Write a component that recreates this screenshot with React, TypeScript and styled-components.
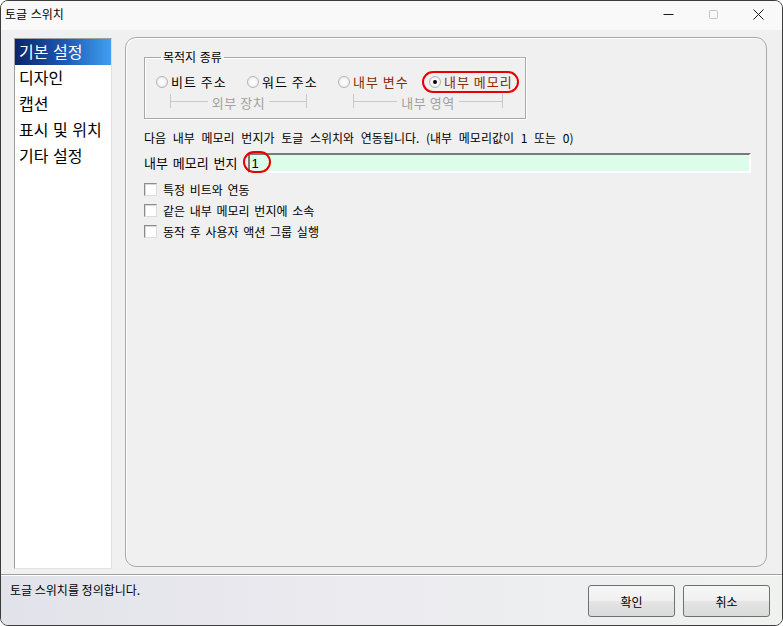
import React from "react";
import styled, { createGlobalStyle } from "styled-components";

const GlobalStyle = createGlobalStyle`
    html, body {
        margin: 0;
        padding: 0;
        background: #ffffff;
    }
    body {
        font-family: "Noto Sans CJK KR", "Liberation Sans", sans-serif;
        color: #000;
    }
    * {
        box-sizing: border-box;
    }
`;

const menuItems = ["기본 설정", "디자인", "캡션", "표시 및 위치", "기타 설정"];

const checkOptions = ["특정 비트와 연동", "같은 내부 메모리 번지에 소속", "동작 후 사용자 액션 그룹 실행"];

const App: React.FC = () => {
    return (
        <>
            <GlobalStyle />
            <Window>
                <TitleBar>
                    <Title>토글 스위치</Title>
                    <Controls>
                        <CtrlButton>
                            <svg width="11" height="11" viewBox="0 0 11 11">
                                <line x1="0.5" y1="5.5" x2="10.5" y2="5.5" stroke="#1a1a1a" strokeWidth="1" />
                            </svg>
                        </CtrlButton>
                        <CtrlButton>
                            <svg width="11" height="11" viewBox="0 0 11 11">
                                <rect x="1.5" y="1.5" width="8" height="8" rx="1" fill="none" stroke="#c4c4c4" strokeWidth="1" />
                            </svg>
                        </CtrlButton>
                        <CtrlButton>
                            <svg width="11" height="11" viewBox="0 0 11 11">
                                <path d="M0.5 0.5 L10.5 10.5 M10.5 0.5 L0.5 10.5" stroke="#1a1a1a" strokeWidth="1" />
                            </svg>
                        </CtrlButton>
                    </Controls>
                </TitleBar>

                <Body>
                    <ListBox>
                        {menuItems.map((item, i) => (
                            <ListItem key={item} $selected={i === 0}>
                                {item}
                            </ListItem>
                        ))}
                    </ListBox>

                    <Panel>
                        <GroupBox>
                            <Legend>목적지 종류</Legend>
                            <RadioRow>
                                <RadioItem>
                                    <RadioDot />
                                    <RadioLabel>비트 주소</RadioLabel>
                                </RadioItem>
                                <RadioItem>
                                    <RadioDot />
                                    <RadioLabel>워드 주소</RadioLabel>
                                </RadioItem>
                                <RadioItem>
                                    <RadioDot />
                                    <RadioLabel $internal>내부 변수</RadioLabel>
                                </RadioItem>
                                <RadioItem>
                                    <RadioDot $checked />
                                    <RadioLabel $internal>내부 메모리</RadioLabel>
                                    <HighlightRing $left={-7} $top={-11} $width={97} $height={22} />
                                </RadioItem>
                            </RadioRow>
                            <BracketRow>
                                <Bracket $width={137}>
                                    <BracketText>외부 장치</BracketText>
                                </Bracket>
                                <Bracket $width={150} $offset={46}>
                                    <BracketText>내부 영역</BracketText>
                                </Bracket>
                            </BracketRow>
                        </GroupBox>

                        <Description>
                            다음 내부 메모리 번지가 토글 스위치와 연동됩니다. (내부 메모리값이 1 또는 0)
                        </Description>

                        <AddressRow>
                            <FieldLabel>내부 메모리 번지</FieldLabel>
                            <FieldBox>
                                <FieldInput defaultValue="1" />
                                <HighlightRing $left={-5} $top={-2} $width={28} $height={22} />
                            </FieldBox>
                        </AddressRow>

                        <CheckList>
                            {checkOptions.map((label) => (
                                <CheckRow key={label}>
                                    <CheckBox />
                                    <CheckLabel>{label}</CheckLabel>
                                </CheckRow>
                            ))}
                        </CheckList>
                    </Panel>
                </Body>

                <Footer>
                    <StatusText>토글 스위치를 정의합니다.</StatusText>
                    <ButtonGroup>
                        <DialogButton>확인</DialogButton>
                        <DialogButton>취소</DialogButton>
                    </ButtonGroup>
                </Footer>
            </Window>
        </>
    );
};

export default App;

const Window = styled.div`
    width: 783px;
    height: 626px;
    display: flex;
    flex-direction: column;
    border: 1px solid #3c3c3c;
    border-radius: 8px;
    overflow: hidden;
    background: #f0f0f0;
`;

const TitleBar = styled.div`
    height: 29px;
    flex-shrink: 0;
    display: flex;
    align-items: flex-start;
    justify-content: space-between;
    background: #f9f9f9;
`;

const Title = styled.span`
    margin: 4px 0 0 4px;
    font-size: 12px;
    line-height: 17px;
    word-spacing: 1px;
`;

const Controls = styled.div`
    display: flex;
    margin-right: 1px;
`;

const CtrlButton = styled.div`
    width: 45px;
    height: 26px;
    display: flex;
    align-items: center;
    justify-content: center;
`;

const Body = styled.div`
    flex: 1;
    display: flex;
    gap: 13px;
    padding: 7px 15px 5px 13px;
`;

const ListBox = styled.div`
    width: 98px;
    margin-top: 1px;
    background: #ffffff;
    border: 1px solid #a0a0a0;
    border-right-color: #e0e0e0;
    border-bottom-color: #e0e0e0;
    padding: 0;
`;

const ListItem = styled.div<{ $selected?: boolean }>`
    height: 26px;
    padding-left: 4px;
    font-size: 16px;
    line-height: 25px;
    word-spacing: 1px;
    color: ${(p) => (p.$selected ? "#ffffff" : "#000000")};
    background: ${(p) => (p.$selected ? "linear-gradient(to right, #0a246a 0%, #1f5cb8 55%, #3fa1ef 100%)" : "transparent")};
`;

const Panel = styled.div`
    flex: 1;
    margin-bottom: 2px;
    border: 1px solid #a8a8a8;
    border-radius: 11px;
    box-shadow: inset 1px 1px 0 #ffffff;
    padding: 12px 18px 0 18px;
    display: flex;
    flex-direction: column;
    align-items: flex-start;
`;

const GroupBox = styled.fieldset`
    width: 382px;
    height: 69px;
    margin: 0;
    padding: 0 0 0 11px;
    border: 1px solid #a8a8a8;
    box-shadow: 1px 1px 0 #ffffff, inset 1px 1px 0 #ffffff;
    border-radius: 0;
`;

const Legend = styled.legend`
    margin-left: 5px;
    padding: 0 2px;
    font-size: 12px;
    line-height: 14px;
    word-spacing: 1px;
`;

const RadioRow = styled.div`
    display: flex;
    align-items: center;
    height: 22px;
    margin-top: 7px;
`;

const RadioItem = styled.div`
    position: relative;
    width: 91px;
    display: flex;
    align-items: center;
    gap: 3px;
`;

const RadioDot = styled.span<{ $checked?: boolean }>`
    width: 12px;
    height: 12px;
    flex-shrink: 0;
    border-radius: 50%;
    border: 1px solid #b4b4b4;
    background: radial-gradient(circle at 50% 50%, #ffffff 0%, #f4f4f4 55%, #dcdcdc 100%);
    display: flex;
    align-items: center;
    justify-content: center;

    &::after {
        content: "";
        width: 4px;
        height: 4px;
        border-radius: 50%;
        background: ${(p) => (p.$checked ? "#000000" : "transparent")};
    }
`;

const RadioLabel = styled.span<{ $internal?: boolean }>`
    font-size: 13px;
    line-height: 18px;
    letter-spacing: 1px;
    white-space: nowrap;
    color: ${(p) => (p.$internal ? "#8a2a00" : "#000000")};
`;

const HighlightRing = styled.span<{ $left: number; $top: number; $width: number; $height: number }>`
    position: absolute;
    left: ${(p) => p.$left}px;
    top: ${(p) => (p.$top < -5 ? `calc(50% + ${p.$top}px)` : `${p.$top}px`)};
    width: ${(p) => p.$width}px;
    height: ${(p) => p.$height}px;
    border: 2.5px solid #e60000;
    border-radius: 11px;
    pointer-events: none;
`;

const BracketRow = styled.div`
    display: flex;
    margin-left: 14px;
    margin-top: 1px;
`;

const Bracket = styled.div<{ $width: number; $offset?: number }>`
    position: relative;
    width: ${(p) => p.$width}px;
    height: 14px;
    margin-left: ${(p) => p.$offset ?? 0}px;
    display: flex;
    justify-content: center;
    align-items: flex-end;
    border-left: 1px solid #c8c8c8;
    border-right: 1px solid #c8c8c8;

    &::before {
        content: "";
        position: absolute;
        left: 0;
        right: 0;
        bottom: 6px;
        border-top: 1px solid #c8c8c8;
    }
`;

const BracketText = styled.span`
    position: relative;
    top: 3px;
    padding: 0 4px;
    background: #f0f0f0;
    font-size: 13px;
    line-height: 16px;
    letter-spacing: 0.5px;
    color: #a0a0a0;
`;

const Description = styled.div`
    margin-top: 11px;
    font-size: 12px;
    line-height: 16px;
    word-spacing: 4px;
`;

const AddressRow = styled.div`
    display: flex;
    align-items: center;
    width: 100%;
    margin-top: 7px;
    gap: 10px;
`;

const FieldLabel = styled.span`
    font-size: 13px;
    line-height: 18px;
    word-spacing: 2px;
`;

const FieldBox = styled.div`
    position: relative;
    flex: 1;
    margin-right: -3px;
`;

const FieldInput = styled.input`
    display: block;
    width: 100%;
    height: 20px;
    margin: 0;
    padding: 0 0 0 2px;
    border: none;
    border-top: 2px solid #7a7a7a;
    border-left: 2px solid #7a7a7a;
    border-right: 2px solid #ffffff;
    border-bottom: 2px solid #ffffff;
    background: #dcfde9;
    font-family: "Liberation Sans", sans-serif;
    font-size: 13px;
    color: #000;
    outline: none;
`;

const CheckList = styled.div`
    display: flex;
    flex-direction: column;
    gap: 4px;
    margin-top: 8px;
`;

const CheckRow = styled.div`
    display: flex;
    align-items: center;
    gap: 6px;
    height: 17px;
`;

const CheckBox = styled.span`
    width: 13px;
    height: 13px;
    border: 1px solid #8c8c8c;
    border-right-color: #dcdcdc;
    border-bottom-color: #dcdcdc;
    background: #ffffff;
    box-shadow: inset 1px 1px 0 #d8d8d8;
`;

const CheckLabel = styled.span`
    font-size: 12px;
    line-height: 16px;
    word-spacing: 2px;
`;

const Footer = styled.div`
    height: 51px;
    flex-shrink: 0;
    display: flex;
    justify-content: space-between;
    padding: 0 12px 0 9px;
    border-top: 1px solid #a0a0a0;
    box-shadow: inset 0 1px 0 #ffffff;
    background: linear-gradient(to right, #e2e2ea 0%, #ececf0 50%, #f0f2f0 100%);
`;

const StatusText = styled.span`
    margin-top: 7px;
    font-size: 12px;
    line-height: 16px;
`;

const ButtonGroup = styled.div`
    display: flex;
    gap: 8px;
    margin-top: 10px;
`;

const DialogButton = styled.button`
    width: 87px;
    height: 32px;
    border: 1px solid #707070;
    border-radius: 3px;
    background: linear-gradient(to bottom, #f7f7f7 0%, #f0f0f0 48%, #e4e4e4 52%, #dadada 100%);
    font-family: "Noto Sans CJK KR", sans-serif;
    font-size: 12px;
    color: #000;
    padding: 0;
`;
